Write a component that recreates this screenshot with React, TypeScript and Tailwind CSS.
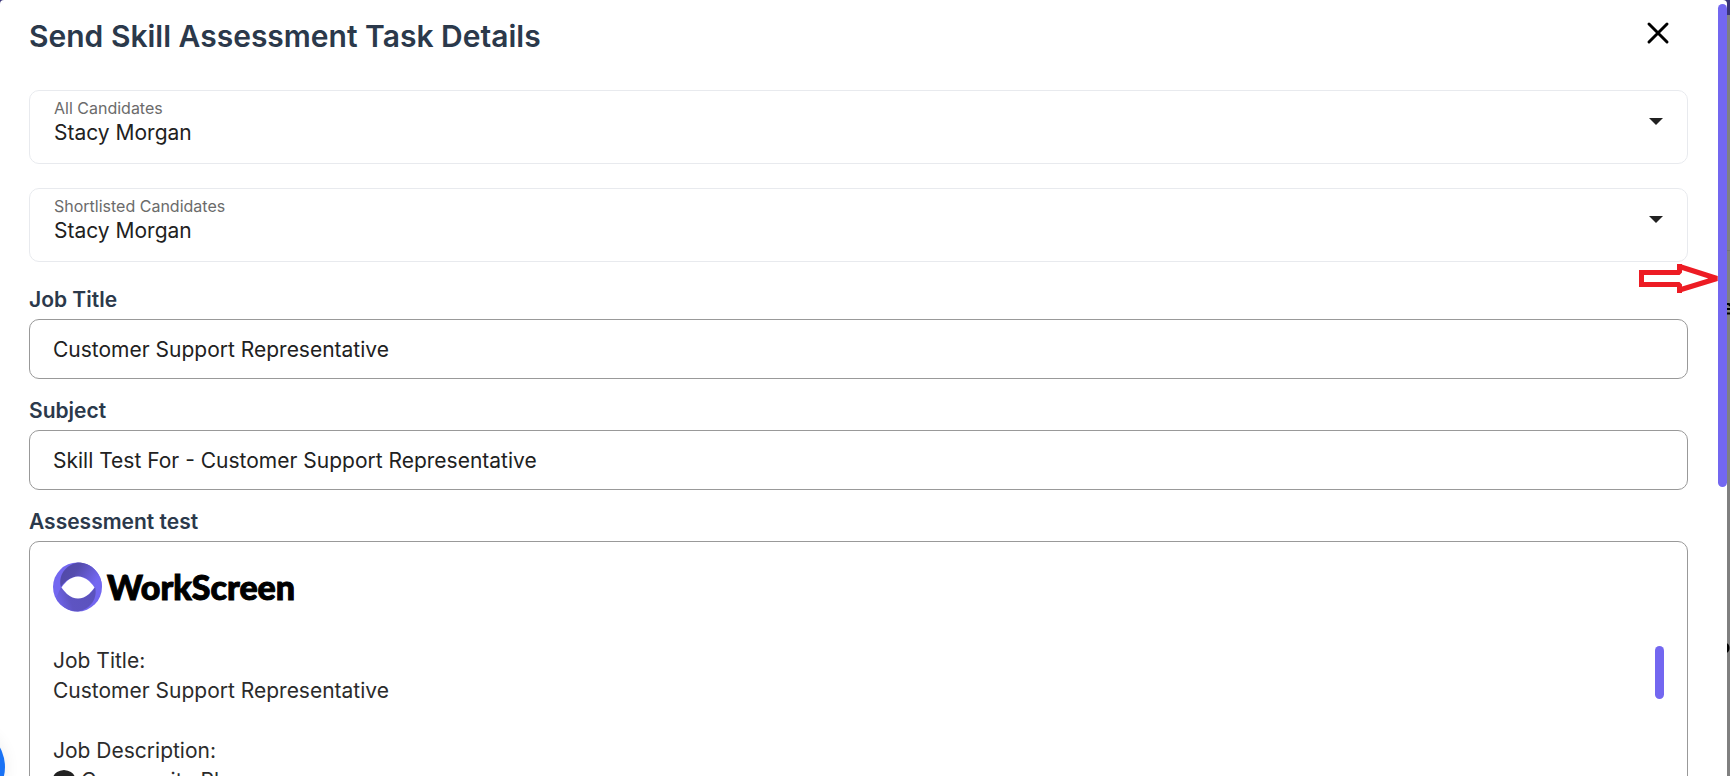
function CandidateSelect({ id, label }: { id: string; label: string }) {
  return (
    <div className="relative flex h-[74px] flex-col rounded-[10px] border border-[#e8eaee] px-6 pt-[7px]">
      <label htmlFor={id} className="text-[16px] leading-5 text-[#6b6b6b]">{label}</label>
      <select id={id} className="w-full appearance-none bg-transparent text-[21px] leading-[30px] text-[#212121] outline-none">
        <option>Stacy Morgan</option>
      </select>
      <svg aria-hidden="true" viewBox="0 0 14 7" className="pointer-events-none absolute right-6 top-[27px] h-[7px] w-[14px] fill-[#212121]">
        <path d="M0 0H14L7 7Z" />
      </svg>
    </div>
  );
}

const labelClass = "text-[21px] font-semibold leading-[31px] text-[#2b394b]";

function TextField({ id, label, value }: { id: string; label: string; value: string }) {
  return (
    <div className="flex flex-col gap-1">
      <label htmlFor={id} className={labelClass}>{label}</label>
      <input id={id} type="text" defaultValue={value} className="h-[60px] w-full rounded-[10px] border border-[#999] px-[23px] text-[21px] text-[#212121] outline-none" />
    </div>
  );
}

function Logo() {
  return (
    <div className="flex items-center gap-1">
      <svg aria-hidden="true" viewBox="0 0 50 50" className="size-[50px]">
        <defs>
          <linearGradient id="upper" x1="0" y1="0" x2="1" y2="0.4">
            <stop offset="0" stopColor="#5048a5" />
            <stop offset="0.45" stopColor="#554cae" />
            <stop offset="1" stopColor="#7367f0" />
          </linearGradient>
          <linearGradient id="lower" x1="1" y1="0.6" x2="0" y2="0.8">
            <stop offset="0" stopColor="#5b52bd" />
            <stop offset="0.6" stopColor="#5e54c2" />
            <stop offset="1" stopColor="#7367f0" />
          </linearGradient>
        </defs>
        <circle cx="24.5" cy="25" r="24.5" fill="#7367f0" />
        <path d="M8 25C5 14 12 3 25 .5C38 .5 49 11 49 25L42 25C34 11 17 11 8 25Z" fill="url(#upper)" />
        <path d="M42 25C45 36 38 47 25 49.5C15 49.5 7 44 3 36L8 25C17 39 34 39 42 25Z" fill="url(#lower)" />
        <path d="M8.500 25.500Q10 23 14 19Q25 10 36 19Q40 23 41.500 25.500Q40 28 36 32Q25 41 14 32Q10 28 8.500 25.500Z" fill="#fff" />
      </svg>
      <span className="font-[Lato,sans-serif] text-[34px] font-black leading-[50px] text-black [-webkit-text-stroke:1px_black]">WorkScreen</span>
    </div>
  );
}

export default function App() {
  return (
    <div className="relative flex h-screen overflow-hidden bg-[#808080] font-[Inter,sans-serif]">
      <div className="absolute inset-x-0 top-0 h-[15px] bg-[#3a3478]" />
      <main className="relative min-w-0 flex-1 overflow-hidden rounded-t-[4px] bg-white pl-[29px] pr-[39px]">
        <header className="flex h-[90px] items-start justify-between pr-[18px] pt-[18px]">
          <h1 className="text-[30px] font-semibold leading-9 text-[#2b394b]">Send Skill Assessment Task Details</h1>
          <button type="button" aria-label="Close" className="mt-[3px] flex size-6 items-center justify-center">
            <svg aria-hidden="true" viewBox="0 0 24 24" className="size-6 stroke-black stroke-[3]">
              <path d="M3 3L21 21M21 3L3 21" strokeLinecap="round" />
            </svg>
          </button>
        </header>
        <div className="flex flex-col gap-6">
          <CandidateSelect id="all" label="All Candidates" />
          <CandidateSelect id="shortlisted" label="Shortlisted Candidates" />
        </div>
        <div className="mt-[22px] flex flex-col gap-4">
          <TextField id="job-title" label="Job Title" value="Customer Support Representative" />
          <TextField id="subject" label="Subject" value="Skill Test For - Customer Support Representative" />
          <section aria-labelledby="test" className="flex flex-col gap-1">
            <h2 id="test" className={labelClass}>Assessment test</h2>
            <div className="relative rounded-[10px] border border-[#999] px-[23px] py-5">
              <Logo />
              <div className="mt-[34px] text-[21px] leading-[30px] text-[#2b2b2b]">
                <p>Job Title:</p>
                <p>Customer Support Representative</p>
                <p className="mt-[30px]">Job Description:</p>
                <p className="flex items-center gap-1">
                  <svg aria-hidden="true" viewBox="0 0 24 22" className="h-[22px] w-6 fill-[#222]">
                    <path d="M0 8Q1 1 11 0Q21 1 22 8V14Q21 21 11 22Q1 21 0 14Z" />
                  </svg>
                  Community Pl
                </p>
              </div>
              <div className="absolute right-[23px] top-[104px] h-[53px] w-[9px] rounded-full bg-[#7367f0]" />
            </div>
          </section>
        </div>
        <div className="absolute right-0 top-1 h-[483px] w-[9px] rounded-full bg-[#7367f0]" />
      </main>
      <aside className="relative w-[3px] shrink-0 overflow-hidden" aria-hidden="true">
        <svg viewBox="0 0 3 776" className="absolute left-0 top-0 h-[776px] w-[3px]">
          <path d="M0 250.500H3" stroke="#747474" />
          <path d="M0 304H2L3 306M0 309H3M0 313.500H3" stroke="#000" strokeWidth="2" fill="none" />
          <ellipse cx="-1" cy="648" rx="3.500" ry="5" fill="#000" />
        </svg>
      </aside>
      <svg aria-hidden="true" viewBox="0 0 82 30" className="absolute right-[10px] top-[264px] h-[30px] w-[82px]">
        <path d="M3.500 8.500H41.500V2.500L79 14.500L41.500 26V20.500H3.500Z" fill="#fff" stroke="#ed1c24" strokeWidth="5" strokeLinejoin="bevel" />
        <path d="M1 6H6V11H1ZM1 18H6V23H1ZM39 0H44V5H39ZM39 24H44V29H39Z" fill="#ed1c24" />
      </svg>
      <div className="absolute -bottom-[31px] -left-[75px] size-20 rounded-full bg-[#1972f5] shadow-[0_0_16px_rgba(0,0,0,0.08)]" />
    </div>
  );
}
